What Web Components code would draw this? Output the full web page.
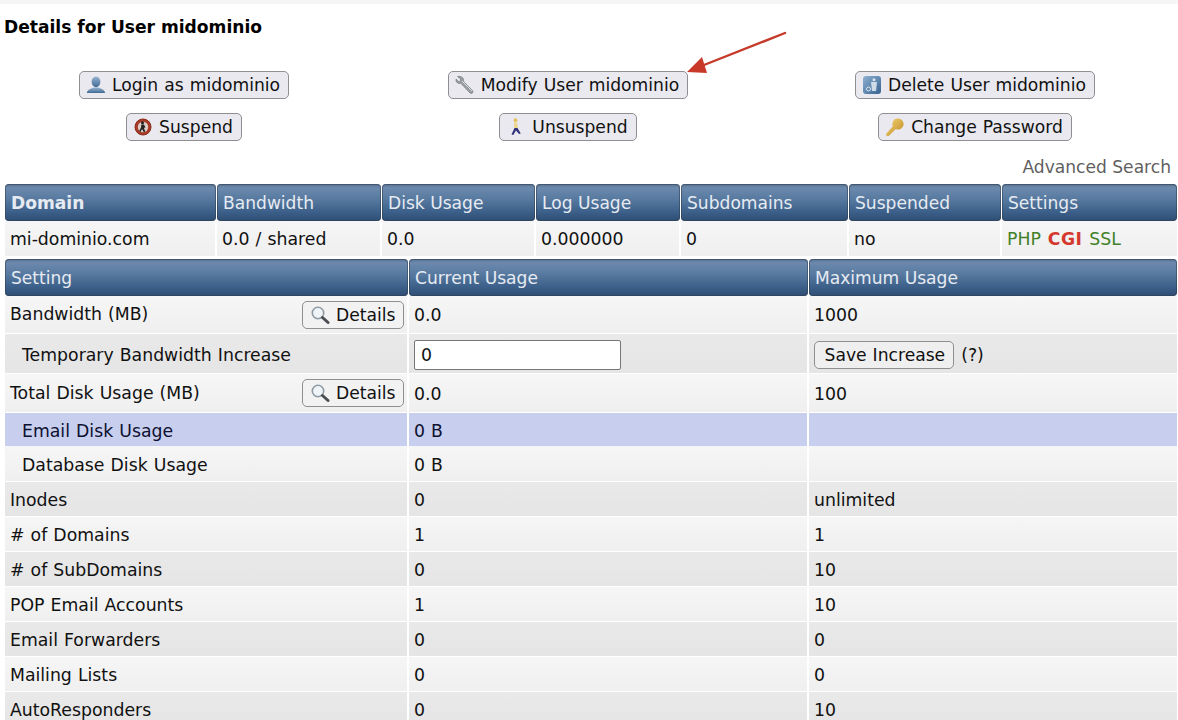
<!DOCTYPE html>
<html>
<head>
<meta charset="utf-8">
<title>Details for User midominio</title>
<style>
html, body { margin: 0; padding: 0; background: #fff; height: 720px; overflow: hidden; }
body { font-family: "DejaVu Sans", Verdana, sans-serif; font-size: 17.3px; word-spacing: 0.6px; color: #111; }
</style>
</head>
<body>
<template id="icons">
  <svg data-name="user" viewBox="0 0 20 20" width="20" height="20">
    <defs><linearGradient id="u" x1="0" y1="0" x2="0" y2="1"><stop offset="0" stop-color="#9ab4cf"/><stop offset="1" stop-color="#3f6a94"/></linearGradient></defs>
    <ellipse cx="10" cy="6.800" rx="4.400" ry="5.400" fill="url(#u)"/>
    <path d="M.8 18c.5-3.600 4.700-4.300 6.700-5.500h5c2 1.200 6.200 1.900 6.700 5.500z" fill="url(#u)"/>
  </svg>
  <svg data-name="wrench" viewBox="0 0 20 20" width="20" height="20">
    <path d="M2.500 1.500l3 2.500.2 2.200-2 .3-2.700-2.500c-.3 2 .5 3.700 2.300 4.300 1 .3 1.800.2 2.500 0L15 18c1 1 3 .3 3-1.300 0-.5-.2-1-.6-1.300L8.500 6.500c.3-1.200.2-2.600-.8-3.700-1.300-1.300-3.400-1.800-5.200-1.300z" fill="#9a9ea2" stroke="#6c7276" stroke-width=".6"/>
    <path d="M7 6l10 10" stroke="#dde0e2" stroke-width="1"/>
  </svg>
  <svg data-name="trash" viewBox="0 0 20 20" width="20" height="20">
    <defs><linearGradient id="t" x1="0" y1="0" x2="1" y2="1"><stop offset="0" stop-color="#8fb0d2"/><stop offset="1" stop-color="#36628f"/></linearGradient></defs>
    <rect x="1" y="1" width="18" height="18" rx="3" fill="url(#t)"/>
    <path d="M9 7h6l-1 9h-4z" fill="#dbe5ee" opacity=".9"/>
    <circle cx="12" cy="4.800" r="1.500" fill="#dbe5ee"/>
    <circle cx="6.500" cy="14" r="2" fill="none" stroke="#dbe5ee"/>
  </svg>
  <svg data-name="suspend" viewBox="0 0 20 20" width="20" height="20">
    <circle cx="10" cy="10" r="8" fill="#a83c28" stroke="#8c2b1a"/>
    <circle cx="10" cy="10" r="5.200" fill="#ddd0c8"/>
    <circle cx="9.500" cy="5.800" r="1.500" fill="#222"/>
    <path d="M8.300 7.500l2.700 0 1.500 3-1.600.3 1.400 4-1.700.3-1.500-3-1.700 3-1.300-.8 2-4z" fill="#222"/>
  </svg>
  <svg data-name="walk" viewBox="0 0 20 20" width="20" height="20">
    <circle cx="9.500" cy="3.200" r="1.900" fill="#e3c25e"/>
    <path d="M8 5.500h3l1 5.500H8.200z" fill="#ecd88c"/>
    <path d="M8.500 11L5.500 17.500l1.800.5L10 13.500l3 3.500 1.800-.6-3.300-5.400z" fill="#33337a"/>
  </svg>
  <svg data-name="key" viewBox="0 0 20 20" width="20" height="20">
    <defs><linearGradient id="k" x1="0" y1="0" x2="1" y2="1"><stop offset="0" stop-color="#f6d676"/><stop offset="1" stop-color="#bd8a24"/></linearGradient></defs>
    <path d="M13 1.500a5.500 5.500 0 1 1-2.200 10.500L4 18.800c-.8.600-2 .4-2.500-.2-.5-.6-.5-1.500 0-2.200l6.300-7.100A5.500 5.500 0 0 1 13 1.500z" fill="url(#k)"/>
  </svg>
  <svg data-name="search" viewBox="0 0 20 20" width="20" height="20">
    <circle cx="8" cy="8" r="5.700" fill="#eef4f8" stroke="#8f9aa3" stroke-width="1.600"/>
    <path d="M12.500 12.500l5.500 5" stroke="#4b4e52" stroke-width="3" stroke-linecap="round"/>
  </svg>
</template>

<script>
// Small helper so every element sets up its shadow root the same way
function shadow(el, html) {
    el.attachShadow({ mode: 'open' }).innerHTML = html;
}

const iconSource = document.getElementById('icons').content;

class DaIcon extends HTMLElement {
    connectedCallback() {
        shadow(this, `<style>:host { display: inline-flex; width: 20px; height: 20px; flex: none; }</style>`);
        const svg = iconSource.querySelector(`[data-name="${this.getAttribute('name')}"]`);
        this.shadowRoot.appendChild(svg.cloneNode(true));
    }
}

class DaButton extends HTMLElement {
    connectedCallback() {
        const icon = this.getAttribute('icon');
        shadow(this, `
            <style>
                :host { display: inline-flex; }
                button {
                    display: inline-flex;
                    align-items: center;
                    gap: 6px;
                    height: 28px;
                    padding: 0 8px 0 6px;
                    font: 17.15px "DejaVu Sans", Verdana, sans-serif;
                    word-spacing: 0.6px;
                    color: #111;
                    background: #e9e9ef;
                    border: 1.500px solid #8f8f93;
                    border-radius: 5px;
                    white-space: nowrap;
                }
                :host([plain]) button { padding: 0 8px 0 9.500px; background: #efefef; }
                :host([light]) button { background: #f2f2f2; padding: 0 7.500px 0 7px; }
            </style>
            <button>${icon ? `<da-icon name="${icon}"></da-icon>` : ''}<slot></slot></button>`);
    }
}

class DaActions extends HTMLElement {
    connectedCallback() {
        shadow(this, `
            <style>
                :host {
                    display: grid;
                    grid-template-columns: 368px 400px 414px;
                    grid-auto-rows: 42px;
                    align-items: start;
                    justify-items: center;
                    padding-top: 28px;
                    height: 87px;
                }
            </style>
            <slot></slot>`);
    }
}

class DaTable extends HTMLElement {
    connectedCallback() {
        shadow(this, `
            <style>
                :host { display: block; margin-left: 5px; width: 1172px; }
            </style>
            <slot></slot>`);
    }
}

class DaRow extends HTMLElement {
    connectedCallback() {
        shadow(this, `
            <style>
                :host {
                    display: grid;
                    grid-template-columns: var(--cols);
                    height: var(--h, 35px);
                    box-sizing: border-box;
                    border-bottom: 1px solid #fff;
                    background: linear-gradient(#f6f6f6, #efefef);
                }
                :host([alt]) { background: linear-gradient(#e9e9e9, #e5e5e5); }
                :host([hl]) { background: #c7ceee; border-bottom: 0; color: #0e1030; }
                :host([head]) { border-bottom: 0; background: none; }
            </style>
            <slot></slot>`);
    }
}

class DaCell extends HTMLElement {
    connectedCallback() {
        shadow(this, `
            <style>
                :host {
                    display: flex;
                    align-items: center;
                    justify-content: space-between;
                    padding: var(--pt, 1px) 5px 0;
                    min-width: 0;
                    white-space: nowrap;
                    box-sizing: border-box;
                    border-right: 2px solid #fff;
                }
                :host(:last-child) { border-right: 0; }
                :host([indent]) { padding-left: 17px; }
                :host([tools]) { padding: 0 3px 0 5px; }
                :host([flush]) { padding-top: 0; }
            </style>
            <slot></slot>`);
    }
}

class DaHead extends HTMLElement {
    connectedCallback() {
        shadow(this, `
            <style>
                :host {
                    display: flex;
                    align-items: center;
                    padding: 0 6px;
                    margin-right: 1px;
                    color: #e6ebf2;
                    font-size: 17.1px;
                    word-spacing: 0;
                    white-space: nowrap;
                    border-radius: 4px;
                    box-sizing: border-box;
                    background: linear-gradient(#55708f 0%, #6c89ad 10%, #57799f 42%, #3a5e88 78%, #2f4d73 100%);
                    box-shadow: inset 0 0 0 1px rgba(50, 62, 80, .55);
                }
                :host(:last-child) { margin-right: 0; }
                :host([strong]) { font-weight: bold; }
            </style>
            <slot></slot>`);
    }
}

class DaFlags extends HTMLElement {
    connectedCallback() {
        shadow(this, `
            <style>
                :host { display: inline-flex; gap: 7px; }
                .on { color: #3f8028; }
                .off { color: #d4382e; font-weight: bold; letter-spacing: .4px; }
            </style>
            <span class="on">PHP</span><span class="off">CGI</span><span class="on">SSL</span>`);
    }
}

class DaInput extends HTMLElement {
    connectedCallback() {
        shadow(this, `
            <style>
                :host { display: inline-flex; }
                input {
                    width: 207px; height: 30px; box-sizing: border-box;
                    padding: 0 6px; font: 17.3px "DejaVu Sans", Verdana, sans-serif; color: #111;
                    background: #fff; border: 1px solid #77777a; border-radius: 2px;
                }
            </style>
            <input type="text" value="${this.getAttribute('value')}">`);
    }
}

class UserPage extends HTMLElement {
    connectedCallback() {
        shadow(this, `
            <style>
                :host { display: block; position: relative; height: 720px; overflow: hidden; }
                .strip { height: 4px; background: #f6f6f6; }
                h1 { margin: 0; padding: 13px 0 0 4px; height: 26px; font-size: 17.100px; word-spacing: 0; line-height: 21px; color: #000; }
                .arrow { position: absolute; left: 680px; top: 26px; }
            </style>
            <div class="strip"></div>
            <h1>Details for User midominio</h1>
            <slot></slot>
            <svg class="arrow" width="112" height="52" viewBox="0 0 112 52">
                <path d="M105 7L24 39" stroke="#c53a2a" stroke-width="2.400" stroke-linecap="round"/>
                <path d="M7 46L22 31l5 16z" fill="#c9392a"/>
            </svg>`);
    }
}

class DaSearchLink extends HTMLElement {
    connectedCallback() {
        shadow(this, `
            <style>
                :host { display: block; height: 25px; padding-right: 7px; text-align: right; color: #5f5f5f; font-size: 17.100px; word-spacing: 0; line-height: 18px; }
            </style>
            <slot></slot>`);
    }
}

customElements.define('da-icon', DaIcon);
customElements.define('da-button', DaButton);
customElements.define('da-actions', DaActions);
customElements.define('da-table', DaTable);
customElements.define('da-row', DaRow);
customElements.define('da-cell', DaCell);
customElements.define('da-head', DaHead);
customElements.define('da-flags', DaFlags);
customElements.define('da-input', DaInput);
customElements.define('da-search-link', DaSearchLink);
customElements.define('user-page', UserPage);
</script>

<user-page>
  <da-actions>
    <da-button icon="user">Login as midominio</da-button>
    <da-button icon="wrench">Modify User midominio</da-button>
    <da-button icon="trash">Delete User midominio</da-button>
    <da-button icon="suspend">Suspend</da-button>
    <da-button icon="walk">Unsuspend</da-button>
    <da-button icon="key">Change Password</da-button>
  </da-actions>
  <da-search-link>Advanced Search</da-search-link>

  <da-table style="--cols: 212px 165px 154px 145px 168px 153px 175px; --h: 37px; margin-top: 1px">
    <da-row head>
      <da-head strong>Domain</da-head><da-head>Bandwidth</da-head><da-head>Disk Usage</da-head><da-head>Log Usage</da-head><da-head>Subdomains</da-head><da-head>Suspended</da-head><da-head>Settings</da-head>
    </da-row>
    <da-row style="--h: 36px">
      <da-cell flush>mi-dominio.com</da-cell><da-cell flush>0.0 / shared</da-cell><da-cell flush>0.0</da-cell><da-cell flush>0.000000</da-cell><da-cell flush>0</da-cell><da-cell flush>no</da-cell>
      <da-cell flush><da-flags></da-flags></da-cell>
    </da-row>
  </da-table>

  <da-table style="--cols: 404px 400px 368px; --h: 35px; margin-top: 2px">
    <da-row head style="--h: 37px"><da-head>Setting</da-head><da-head>Current Usage</da-head><da-head>Maximum Usage</da-head></da-row>
    <da-row style="--h: 38px"><da-cell tools><span style="margin-top:-2px">Bandwidth (MB)</span><da-button icon="search" light>Details</da-button></da-cell><da-cell flush>0.0</da-cell><da-cell flush>1000</da-cell></da-row>
    <da-row alt style="--h: 40px; --pt: 2px"><da-cell indent>Temporary Bandwidth Increase</da-cell><da-cell><da-input value="0"></da-input></da-cell><da-cell><span style="display:flex;align-items:center;gap:7px"><da-button plain>Save Increase</da-button> (?)</span></da-cell></da-row>
    <da-row style="--h: 39px"><da-cell tools><span>Total Disk Usage (MB)</span><da-button icon="search" light>Details</da-button></da-cell><da-cell>0.0</da-cell><da-cell>100</da-cell></da-row>
    <da-row hl style="--h: 33px; --pt: 2px"><da-cell indent>Email Disk Usage</da-cell><da-cell>0 B</da-cell><da-cell></da-cell></da-row>
    <da-row style="--h: 36px; --pt: 2px"><da-cell indent>Database Disk Usage</da-cell><da-cell>0 B</da-cell><da-cell></da-cell></da-row>
    <da-row alt><da-cell>Inodes</da-cell><da-cell>0</da-cell><da-cell>unlimited</da-cell></da-row>
    <da-row><da-cell># of Domains</da-cell><da-cell>1</da-cell><da-cell>1</da-cell></da-row>
    <da-row alt><da-cell># of SubDomains</da-cell><da-cell>0</da-cell><da-cell>10</da-cell></da-row>
    <da-row><da-cell>POP Email Accounts</da-cell><da-cell>1</da-cell><da-cell>10</da-cell></da-row>
    <da-row alt><da-cell>Email Forwarders</da-cell><da-cell>0</da-cell><da-cell>0</da-cell></da-row>
    <da-row><da-cell>Mailing Lists</da-cell><da-cell>0</da-cell><da-cell>0</da-cell></da-row>
    <da-row alt><da-cell>AutoResponders</da-cell><da-cell>0</da-cell><da-cell>10</da-cell></da-row>
  </da-table>
</user-page>
</body>
</html>
